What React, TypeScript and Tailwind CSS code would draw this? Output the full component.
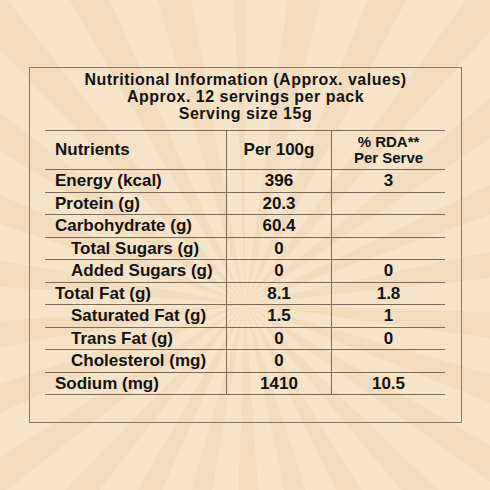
import React from "react";

type Row = { name: string; sub?: boolean; per100: string; rda: string };

const rows: Row[] = [
  { name: "Energy (kcal)", per100: "396", rda: "3" },
  { name: "Protein (g)", per100: "20.3", rda: "" },
  { name: "Carbohydrate (g)", per100: "60.4", rda: "" },
  { name: "Total Sugars (g)", sub: true, per100: "0", rda: "" },
  { name: "Added Sugars (g)", sub: true, per100: "0", rda: "0" },
  { name: "Total Fat (g)", per100: "8.1", rda: "1.8" },
  { name: "Saturated Fat (g)", sub: true, per100: "1.5", rda: "1" },
  { name: "Trans Fat (g)", sub: true, per100: "0", rda: "0" },
  { name: "Cholesterol (mg)", sub: true, per100: "0", rda: "" },
  { name: "Sodium (mg)", per100: "1410", rda: "10.5" },
];

export default function App() {
  return (
    <div className="w-[490px] h-[490px] overflow-hidden bg-[#f4e3c6] bg-[repeating-conic-gradient(from_0deg_at_50%_62%,#f5e4c8_0deg_8deg,#f1ddbe_8deg_14deg)] pt-[67px] pl-[29px] font-['Liberation_Sans',Arial,sans-serif] text-[#151210]">
      <div className="w-[433px] h-[356px] border border-[#8a7a66] pt-[3px]">
        <div className="text-center font-bold text-[16px] leading-[17px] tracking-[0.5px]">
          <p>Nutritional Information (Approx. values)</p>
          <p>Approx. 12 servings per pack</p>
          <p>Serving size 15g</p>
        </div>
        <div className="ml-[15px] mt-[8px] w-[400px] border-t-[1.5px] border-[#7d6d5a] font-bold text-[17px]">
          <div className="grid grid-cols-[182px_105px_113px] h-[39px] border-b-[1.5px] border-[#7d6d5a]">
            <div className="flex items-center pl-[10px] border-r-[1.5px] border-[#7d6d5a]">Nutrients</div>
            <div className="flex items-center justify-center border-r-[1.5px] border-[#7d6d5a]">Per 100g</div>
            <div className="flex flex-col items-center justify-center leading-[16px] text-[15px]">
              <span>% RDA**</span>
              <span>Per Serve</span>
            </div>
          </div>
          {rows.map((r) => (
            <div
              key={r.name}
              className="grid grid-cols-[182px_105px_113px] h-[22.5px] border-b-[1.5px] border-[#7d6d5a] leading-[21px]"
            >
              <div className={`border-r-[1.5px] border-[#7d6d5a] ${r.sub ? "pl-[26px]" : "pl-[10px]"}`}>{r.name}</div>
              <div className="text-center border-r-[1.5px] border-[#7d6d5a]">{r.per100}</div>
              <div className="text-center">{r.rda}</div>
            </div>
          ))}
        </div>
      </div>
    </div>
  );
}
